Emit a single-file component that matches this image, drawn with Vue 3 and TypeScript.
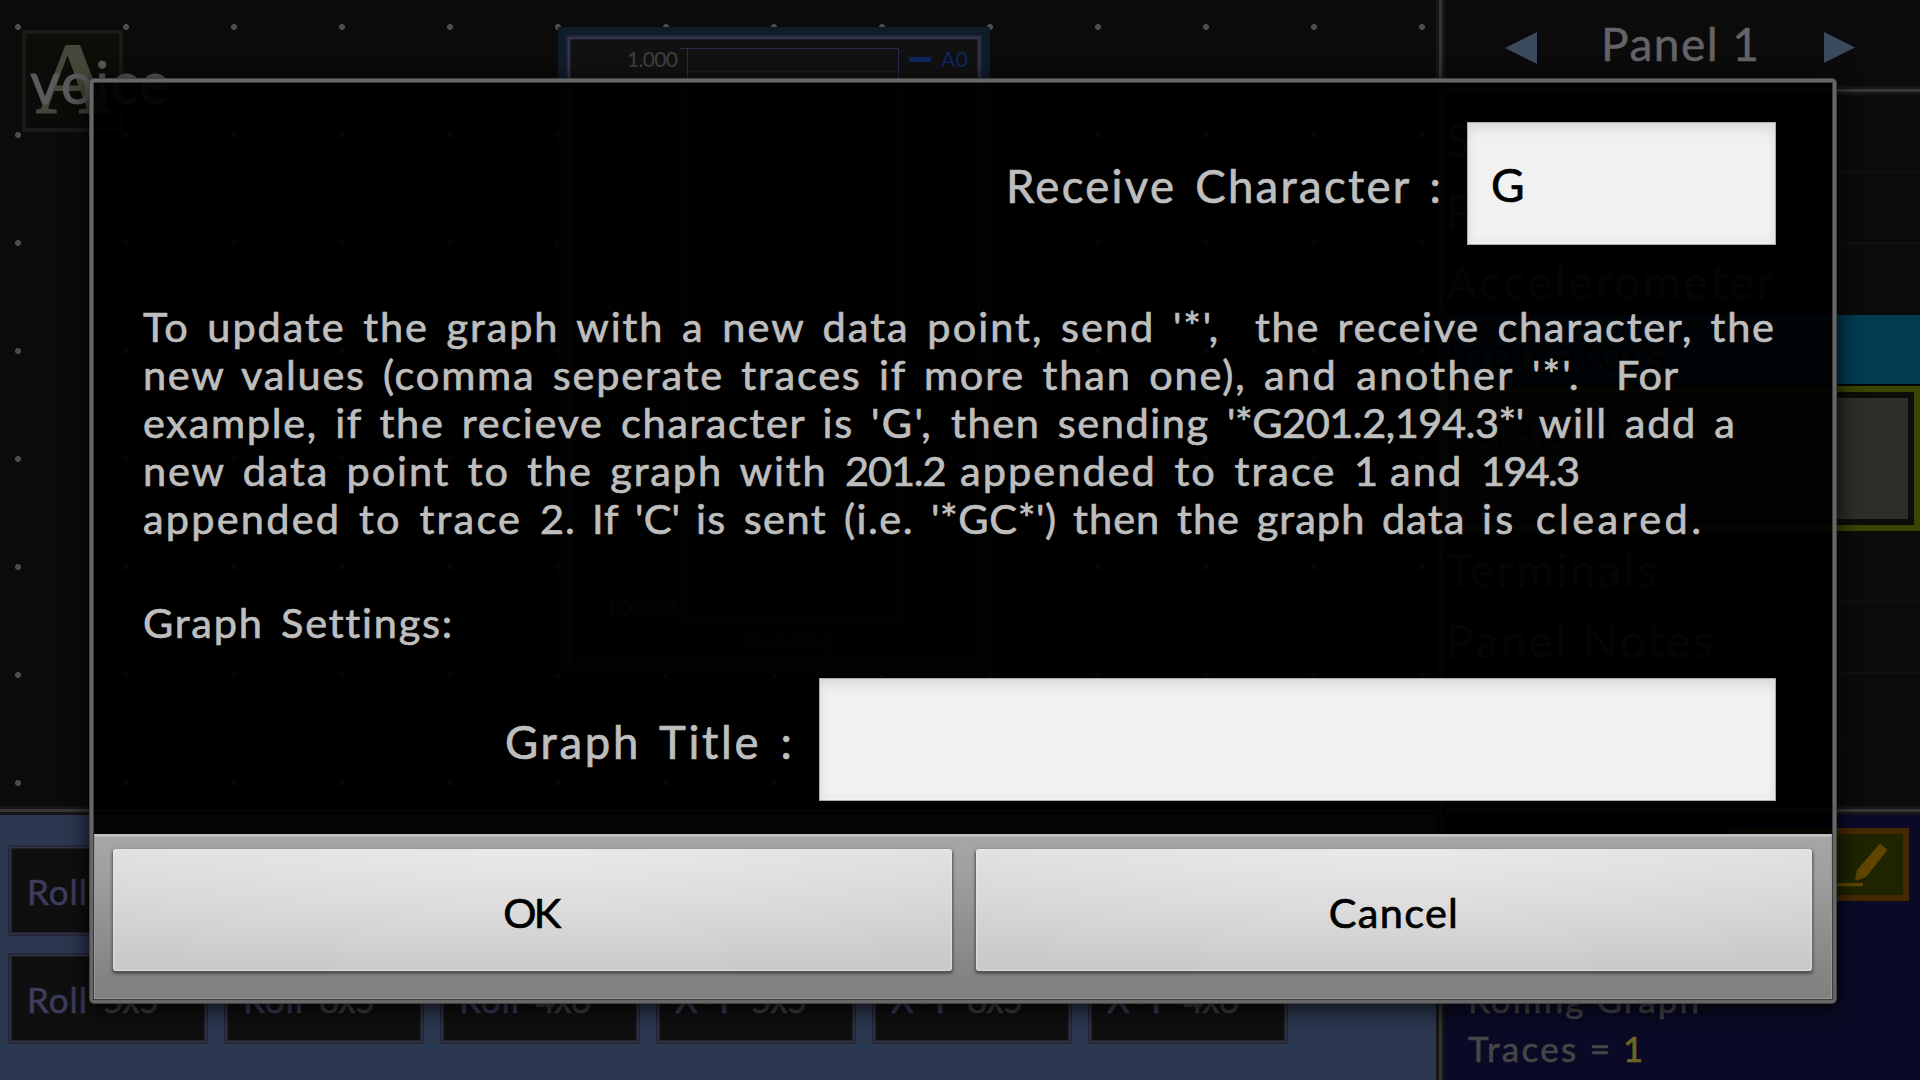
<script setup lang="ts">
import type { Directive } from 'vue'

// Tracks a run of text out (or in) until it spans the given width.
const vFit: Directive<HTMLElement, number> = {
  mounted(el, { value }) {
    const text = el.textContent ?? ''
    const gaps = text.endsWith(' ') ? text.length : text.length - 1
    const natural = el.getBoundingClientRect().width
    if (gaps > 0) el.style.letterSpacing = `${(value - natural) / gaps}px`
  },
}

interface Run { text: string; width: number }
const help: Run[][] = [
  [
    { text: 'To update the graph with ', width: 539 },
    { text: 'a new data point, send ', width: 491 },
    { text: "'*',  ", width: 82 },
    { text: 'the receive character, the', width: 519 },
  ],
  [
    { text: 'new values ', width: 240 },
    { text: '(comma seperate traces ', width: 496 },
    { text: 'if more than one), ', width: 385 },
    { text: 'and another ', width: 268 },
    { text: "'*'.  ", width: 84 },
    { text: 'For', width: 62 },
  ],
  [
    { text: 'example, if the recieve ', width: 478 },
    { text: 'character is ', width: 250 },
    { text: "'G', ", width: 80 },
    { text: 'then sending ', width: 276 },
    { text: "'*G201.2,194.3*' ", width: 311 },
    { text: 'will add a', width: 196 },
  ],
  [
    { text: 'new data point to the graph with ', width: 702 },
    { text: '201.2 ', width: 115 },
    { text: 'appended to trace ', width: 394 },
    { text: '1 ', width: 36 },
    { text: 'and ', width: 91 },
    { text: '194.3', width: 99 },
  ],
  [
    { text: 'appended to trace ', width: 397 },
    { text: '2. If ', width: 95 },
    { text: "'C' ", width: 61 },
    { text: 'is sent ', width: 148 },
    { text: '(i.e. ', width: 87 },
    { text: "'*GC*') ", width: 142 },
    { text: 'then the graph data ', width: 409 },
    { text: 'is cleared.', width: 219 },
  ],
]

interface Preset { kind: string; size: string }
const presets: Preset[] = [
  { kind: 'Roll', size: '' },
  { kind: '', size: '' },
  { kind: '', size: '' },
  { kind: '', size: '' },
  { kind: '', size: '' },
  { kind: '', size: '' },
  { kind: 'Roll', size: '5x5' },
  { kind: 'Roll', size: '8x5' },
  { kind: 'Roll', size: '4x6' },
  { kind: 'X-Y', size: '5x5' },
  { kind: 'X-Y', size: '8x5' },
  { kind: 'X-Y', size: '4x6' },
]
</script>

<template>
  <div class="screen">
    <div class="app">
      <section class="left">
        <div class="canvas">
          <div class="widget-text">
            <span class="letter">A</span>
          </div>
          <span v-fit="140" class="voice">voice</span>
          <div class="graph">
            <div class="plot">
              <svg width="406" height="622" viewBox="0 0 406 622">
                <path d="M109 8.500H327.500V581.500H109M116.500 8V582" fill="none" stroke="#2c294b" />
                <path d="M117 31.500H327M117 123.500H327M117 191.500H327M117 237.500H327M117 466.500H327" stroke="#1b1c20" />
                <rect x="338" y="17" width="22" height="5" fill="#12265f" />
                <g font-family="Lato, sans-serif" font-size="21">
                  <text x="56" y="27" textLength="51" fill="#404040">1.000</text>
                  <text x="370" y="27" textLength="27" fill="#12265f">A0</text>
                  <text x="35" y="575" textLength="72" fill="#404040">1.00e-03</text>
                  <text x="177" y="609" textLength="88" font-size="23" fill="#18302f">Reading</text>
                </g>
              </svg>
            </div>
          </div>
        </div>
        <div class="presets">
          <div v-for="(p, i) in presets" :key="i" class="preset">
            <span v-if="p.kind" v-fit="60" class="kind">{{ p.kind }}</span>
            <span v-if="p.size" v-fit="56" class="size">{{ p.size }}</span>
          </div>
        </div>
      </section>
      <aside class="side">
        <header class="panel-head">
          <svg width="32" height="32" viewBox="0 0 32 32"><path d="M32 0V32L0 16Z" fill="#3b495e" /></svg>
          <span class="panel-name"><span v-fit="158">Panel 1</span></span>
          <svg width="32" height="32" viewBox="0 0 32 32"><path d="M0 0V31L31 15.500Z" fill="#3b495e" /></svg>
        </header>
        <nav class="menu">
          <div class="item">S</div>
          <div class="item">P</div>
          <div class="item"><span v-fit="327">Accelerometer</span></div>
          <div class="item active"><span v-fit="220">Indicators</span></div>
          <div class="choice"><div class="choice-box"><span v-fit="154">Graphs</span></div></div>
          <div class="item"><span v-fit="211">Terminals</span></div>
          <div class="item"><span v-fit="267">Panel Notes</span></div>
          <div class="item"></div>
          <div class="item"></div>
        </nav>
        <footer class="info">
          <div class="edit">
            <svg width="168" height="61" viewBox="0 0 168 61">
              <path d="M145 9.500L152.500 16L131 43L120 47L122 36Z" fill="#5e4600" />
              <rect x="90" y="49" width="38" height="3.300" fill="#5e4600" />
            </svg>
          </div>
          <div class="fact"><span v-fit="231">Rolling Graph</span></div>
          <div class="fact"><span class="fact-key"><span v-fit="142">Traces =</span></span><span class="one">1</span></div>
        </footer>
      </aside>
    </div>

    <div class="dialog">
      <div class="body">
        <div class="field">
          <label><span v-fit="435">Receive Character :</span></label>
          <div class="input short">G</div>
        </div>
        <div class="help">
          <div v-for="(line, i) in help" :key="i" class="line"><span v-for="run in line" :key="run.text" v-fit="run.width">{{ run.text }}</span></div>
        </div>
        <div class="line heading"><span v-fit="308">Graph Settings:</span></div>
        <div class="field">
          <label class="title-label"><span v-fit="287">Graph Title :</span></label>
          <div class="input long"></div>
        </div>
      </div>
      <div class="actions">
        <div class="button ok"><span v-fit="58">OK</span></div>
        <div class="button"><span v-fit="129">Cancel</span></div>
      </div>
    </div>
  </div>
</template>

<style>
body {
  margin: 0;
  background: #0b0b0b;
  overflow: hidden;
}
</style>

<style scoped>
* {
  box-sizing: border-box;
}
.screen {
  position: relative;
  width: 1920px;
  height: 1080px;
  overflow: hidden;
  font-family: Lato, sans-serif;
  white-space: pre;
  background: #0b0b0b;
}
.app {
  display: flex;
  height: 1080px;
}
.left {
  width: 1436px;
}
.canvas {
  position: relative;
  height: 806px;
  background: radial-gradient(circle at 54px 54px, #4d4d4d 2.600px, transparent 3.400px) -36px -27px / 108px 108px;
}
.widget-text {
  position: absolute;
  left: 22px;
  top: 30px;
  width: 101px;
  height: 102px;
  border: 4px solid #181a15;
  background: linear-gradient(20deg, #080b08, #0e0e07);
}
.letter {
  position: absolute;
  left: 9px;
  top: 6px;
  font: bold 104px/78px "Liberation Serif", serif;
  color: #46463b;
}
.voice {
  position: absolute;
  left: 30px;
  top: 52px;
  font-size: 58px;
  line-height: 60px;
  color: #5b595c;
  -webkit-text-stroke: 0.8px #5b595c;
}
.graph {
  position: absolute;
  left: 558px;
  top: 27px;
  width: 432px;
  height: 648px;
  padding: 8px;
  background: #0f1d2b;
}
.plot {
  width: 416px;
  height: 632px;
  border: 2px solid #23253a;
  padding: 3px;
  box-shadow: inset 0 0 0 2px #343547, inset 0 0 0 3px #1d1d26;
  background: #111;
}
.plot svg {
  display: block;
}
.presets {
  display: grid;
  grid-template-columns: repeat(6, 200px);
  grid-auto-rows: 91px;
  gap: 17px 16px;
  height: 274px;
  padding: 39px 8px 0;
  background: linear-gradient(#161616 0 3px, #383838 3px 6px, #161616 6px 9px, #2c3850 9px);
}
.preset {
  position: relative;
  display: flex;
  padding: 22px 0 0 19px;
  border: 2px solid #26283a;
  box-shadow: inset 0 0 0 1px #343547, inset 0 0 0 2px #20202a;
  background: #0f0f0f;
  font-size: 35px;
  line-height: 44px;
}
.kind {
  margin-left: -2px;
  color: #3c3c5c;
  -webkit-text-stroke: 0.6px #3c3c5c;
}
.size {
  position: absolute;
  left: 93px;
  color: #3e3e3e;
  -webkit-text-stroke: 0.6px #3e3e3e;
}
.side {
  width: 484px;
  padding-left: 9px;
  background: linear-gradient(90deg, #161616 0 3px, #343434 3px 6px, #161616 6px 9px, #0b0b0b 9px);
}
.panel-head {
  display: flex;
  align-items: flex-start;
  height: 86px;
  padding: 32px 0 0 60px;
}
.panel-name {
  width: 287px;
  padding-left: 64px;
  margin-top: -16px;
  font-size: 46px;
  line-height: 56px;
  color: #656367;
  -webkit-text-stroke: 0.5px #656367;
}
.menu {
  height: 720px;
  margin-left: -3px;
  padding-top: 16px;
  overflow: hidden;
  background: linear-gradient(#161616 0 3px, #383838 3px 6px, #161616 6px 9px, transparent 9px);
}
.item {
  height: 71px;
  padding-left: 4px;
  border-bottom: 2px solid #101010;
  font-size: 46px;
  line-height: 75px;
  color: #424242;
}
.item:nth-child(3) {
  border: 0;
}
.item.active {
  height: 70px;
  border-bottom: 1px solid #000;
  color: #000;
  background: #003b50;
}
.choice {
  height: 145px;
  margin: 1px 0 1px;
  padding: 6px;
  background: #384600;
}
.choice-box {
  height: 133px;
  padding-left: 5px;
  border: 6px solid #0c0d0a;
  font-size: 46px;
  line-height: 60px;
  color: #0a0b09;
  background: #2c2e27;
}
.info {
  height: 274px;
  padding-top: 22px;
  background: linear-gradient(#161616 0 3px, #383838 3px 6px, #161616 6px 9px, #0a0a26 9px);
}
.edit {
  width: 180px;
  height: 73px;
  margin: 0 0 75px 284px;
  border: 6px solid #462800;
  background: #1e2300;
}
.edit svg {
  display: block;
}
.fact {
  height: 49px;
  padding-left: 23px;
  font-size: 35px;
  line-height: 46px;
  color: #464648;
  -webkit-text-stroke: 0.6px #464648;
}
.fact-key {
  display: inline-block;
  width: 155px;
}
.one {
  color: #6d6922;
  -webkit-text-stroke: 0.6px #6d6922;
}
.dialog {
  position: absolute;
  left: 90px;
  top: 79px;
  width: 1746px;
  height: 924px;
  display: flex;
  flex-direction: column;
  padding: 1px;
  border: 3px solid #666;
  border-radius: 4px;
  box-shadow: 0 0 0 1px #444, 0 4px 22px 2px rgba(0, 0, 0, 0.8), inset 0 0 0 1px #3c3c3c;
}
.body {
  flex: none;
  height: 751px;
  padding: 39px 56px 0 49px;
  background: rgba(0, 0, 0, 0.925);
  color: #bebebe;
  -webkit-text-stroke: 0.7px #bebebe;
}
.field {
  display: flex;
  justify-content: flex-end;
  height: 123px;
}
label {
  width: 461px;
  font-size: 45.5px;
  line-height: 127px;
  word-spacing: 5px;
}
.title-label {
  width: 314px;
}
.input {
  height: 123px;
  border: 1px solid #aaa;
  background: #f1f1f1;
  box-shadow: inset 0 10px 12px -4px #dadada, inset 0 0 10px #dedede, inset 0 -2px 0 #fff;
  color: #000;
  -webkit-text-stroke: 0.7px #000;
  font-size: 46px;
  line-height: 124px;
}
.short {
  width: 309px;
  padding-left: 23px;
}
.long {
  width: 957px;
}
.help {
  padding-top: 57px;
}
.line {
  height: 48px;
  font-size: 41.5px;
  line-height: 48px;
  word-spacing: 5px;
}
.heading {
  margin: 56px 0 32px;
}
.actions {
  flex: 1;
  display: flex;
  gap: 24px;
  padding: 12px 19px 26px 18px;
  border: 1px solid #999;
  border-top: 3px solid #c0bec0;
  background: linear-gradient(#a6a6a6, #a0a0a0 22%, #868686 80%, #808080);
}
.button {
  flex: 1;
  height: 122px;
  border-radius: 3px;
  text-align: center;
  font-size: 41.5px;
  line-height: 126px;
  color: #000;
  -webkit-text-stroke: 0.7px #000;
  background: radial-gradient(ellipse 70% 110% at 50% 0, rgba(255, 255, 255, 0.35), transparent), linear-gradient(#dedede, #c8c8c8);
  box-shadow: inset 0 0 2px 1px rgba(235, 235, 235, 0.6), 0 2px 3px 1px #505050;
}
.ok {
  padding-right: 3px;
}
</style>
